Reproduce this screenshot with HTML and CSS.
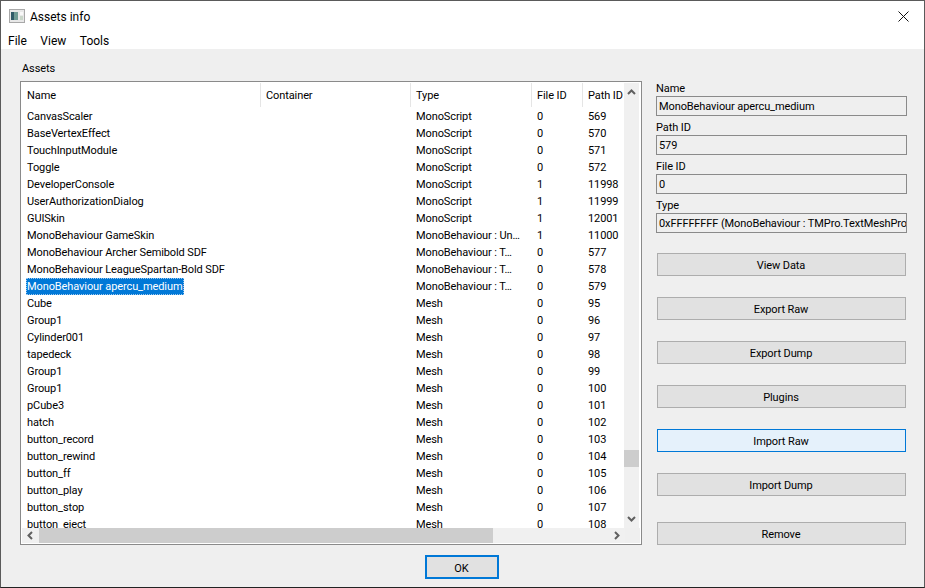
FILE: index.html
```html
<!DOCTYPE html>
<html lang="en">
<head>
<meta charset="utf-8">
<title>Assets info</title>
<link rel="stylesheet" href="styles.css">
</head>
<body>
<div class="window">
  <header class="titlebar">
    <svg class="app-icon" width="16" height="14" viewBox="0 0 16 14"><rect x="0.5" y="0.500" width="15" height="13" fill="#e8e8e8" stroke="#a8a8a8"/><rect x="2" y="3" width="7" height="8" fill="#6f9a94"/><rect x="2" y="3" width="3" height="8" fill="#2f5a68"/><rect x="11" y="3" width="3" height="3" fill="#f8f8f8"/><rect x="11" y="7" width="3" height="4" fill="#c9d6c9"/></svg>
    <span class="title">Assets info</span>
    <svg class="close" width="11" height="11" viewBox="0 0 11 11"><path d="M0.5 0.5L10.5 10.5M10.5 0.5L0.5 10.5" stroke="#111" stroke-width="1" fill="none"/></svg>
  </header>
  <nav class="menubar"><span>File</span><span>View</span><span>Tools</span></nav>
  <main class="content">
    <div class="columns">
      <section class="assets">
        <div class="group-label">Assets</div>
        <div class="table">
          <div class="table-main">
            <div class="viewport">
              <div class="row head"><span>Name</span><span>Container</span><span>Type</span><span>File ID</span><span>Path ID</span></div>
              <div class="rows">
                <div class="row"><span>CanvasScaler</span><span></span><span>MonoScript</span><span>0</span><span>569</span></div>
                <div class="row"><span>BaseVertexEffect</span><span></span><span>MonoScript</span><span>0</span><span>570</span></div>
                <div class="row"><span>TouchInputModule</span><span></span><span>MonoScript</span><span>0</span><span>571</span></div>
                <div class="row"><span>Toggle</span><span></span><span>MonoScript</span><span>0</span><span>572</span></div>
                <div class="row"><span>DeveloperConsole</span><span></span><span>MonoScript</span><span>1</span><span>11998</span></div>
                <div class="row"><span>UserAuthorizationDialog</span><span></span><span>MonoScript</span><span>1</span><span>11999</span></div>
                <div class="row"><span>GUISkin</span><span></span><span>MonoScript</span><span>1</span><span>12001</span></div>
                <div class="row"><span>MonoBehaviour GameSkin</span><span></span><span>MonoBehaviour : Un…</span><span>1</span><span>11000</span></div>
                <div class="row"><span>MonoBehaviour Archer Semibold SDF</span><span></span><span>MonoBehaviour : T…</span><span>0</span><span>577</span></div>
                <div class="row"><span>MonoBehaviour LeagueSpartan-Bold SDF</span><span></span><span>MonoBehaviour : T…</span><span>0</span><span>578</span></div>
                <div class="row"><span><b class="selected">MonoBehaviour apercu_medium</b></span><span></span><span>MonoBehaviour : T…</span><span>0</span><span>579</span></div>
                <div class="row"><span>Cube</span><span></span><span>Mesh</span><span>0</span><span>95</span></div>
                <div class="row"><span>Group1</span><span></span><span>Mesh</span><span>0</span><span>96</span></div>
                <div class="row"><span>Cylinder001</span><span></span><span>Mesh</span><span>0</span><span>97</span></div>
                <div class="row"><span>tapedeck</span><span></span><span>Mesh</span><span>0</span><span>98</span></div>
                <div class="row"><span>Group1</span><span></span><span>Mesh</span><span>0</span><span>99</span></div>
                <div class="row"><span>Group1</span><span></span><span>Mesh</span><span>0</span><span>100</span></div>
                <div class="row"><span>pCube3</span><span></span><span>Mesh</span><span>0</span><span>101</span></div>
                <div class="row"><span>hatch</span><span></span><span>Mesh</span><span>0</span><span>102</span></div>
                <div class="row"><span>button_record</span><span></span><span>Mesh</span><span>0</span><span>103</span></div>
                <div class="row"><span>button_rewind</span><span></span><span>Mesh</span><span>0</span><span>104</span></div>
                <div class="row"><span>button_ff</span><span></span><span>Mesh</span><span>0</span><span>105</span></div>
                <div class="row"><span>button_play</span><span></span><span>Mesh</span><span>0</span><span>106</span></div>
                <div class="row"><span>button_stop</span><span></span><span>Mesh</span><span>0</span><span>107</span></div>
                <div class="row"><span>button_eject</span><span></span><span>Mesh</span><span>0</span><span>108</span></div>
              </div>
            </div>
            <div class="vscroll">
              <svg width="15" height="17" viewBox="0 0 15 17"><path d="M4 11L7.5 7.5L11 11" stroke="#606060" stroke-width="2" fill="none"/></svg>
              <div class="vtrack"><div class="vthumb"></div></div>
              <svg width="15" height="17" viewBox="0 0 15 17"><path d="M4 6L7.5 9.500L11 6" stroke="#606060" stroke-width="2" fill="none"/></svg>
            </div>
          </div>
          <div class="hscroll">
            <svg width="17" height="15" viewBox="0 0 17 15"><path d="M10 4L6.500 7.500L10 11" stroke="#606060" stroke-width="2" fill="none"/></svg>
            <div class="htrack"><div class="hthumb"></div></div>
            <svg width="17" height="15" viewBox="0 0 17 15"><path d="M7 4L10.500 7.500L7 11" stroke="#606060" stroke-width="2" fill="none"/></svg>
            <div class="corner"></div>
          </div>
        </div>
      </section>
      <aside class="side">
        <label class="field-label">Name</label>
        <div class="field">MonoBehaviour apercu_medium</div>
        <label class="field-label">Path ID</label>
        <div class="field">579</div>
        <label class="field-label">File ID</label>
        <div class="field">0</div>
        <label class="field-label">Type</label>
        <div class="field">0xFFFFFFFF (MonoBehaviour : TMPro.TextMeshProUGUI)</div>
        <div class="buttons">
          <button class="btn">View Data</button>
          <button class="btn">Export Raw</button>
          <button class="btn">Export Dump</button>
          <button class="btn">Plugins</button>
          <button class="btn hover">Import Raw</button>
          <button class="btn">Import Dump</button>
          <button class="btn remove">Remove</button>
        </div>
      </aside>
    </div>
    <footer class="footer"><button class="btn ok">OK</button></footer>
  </main>
</div>
</body>
</html>
```
FILE: styles.css
```css
* { box-sizing: border-box; }
html, body { margin: 0; padding: 0; }
body {
  width: 925px;
  height: 588px;
  overflow: hidden;
  font-family: Roboto, sans-serif;
  font-size: 11px;
  letter-spacing: -0.1px;
  color: #000;
  background: #f0f0f0;
}
.window {
  width: 925px;
  height: 588px;
  display: flex;
  flex-direction: column;
  border: 1px solid #5a5a5a;
  border-bottom-color: #222;
}
.titlebar {
  height: 30px;
  flex: none;
  display: flex;
  align-items: center;
  padding: 0 15px 0 8px;
  background: #fff;
}
.app-icon { flex: none; }
.title { margin-left: 5px; padding-top: 2px; font-size: 12px; letter-spacing: 0; flex: 1; }
.close { flex: none; }
.menubar {
  height: 18px;
  flex: none;
  display: flex;
  gap: 13.500px;
  align-items: center;
  padding: 2px 0 0 7px;
  background: #fff;
  font-size: 12px;
  letter-spacing: 0;
}
.content {
  flex: 1;
  display: flex;
  flex-direction: column;
  background: #efefef;
  padding: 11px 17px 0 19px;
}
.columns { display: flex; gap: 14px; }
.assets { width: 622px; flex: none; }
.group-label { height: 16px; line-height: 18px; padding-left: 2px; margin-bottom: 5px; }
.table {
  height: 464px;
  border: 1px solid #8a8a8a;
  padding: 1px;
  background: #fff;
  display: flex;
  flex-direction: column;
}
.table-main { flex: 1; min-height: 0; display: flex; }
.viewport { width: 602px; flex: none; overflow: hidden; display: flex; flex-direction: column; }
.rows { flex: 1; min-height: 0; overflow: hidden; }
.row {
  display: grid;
  grid-template-columns: 239px 150px 121px 51px 41px;
  height: 17px;
  line-height: 17px;
  white-space: nowrap;
}
.row span { padding-left: 5px; overflow: hidden; }
.row.head { height: 25px; line-height: 26px; }
.row.head span { border-right: 1px solid #e5e5e5; height: 24px; }
.row.head span:last-child { border-right: 0; }
.selected {
  display: inline-block;
  margin-left: -1px;
  padding: 0 2px 0 1px;
  height: 17px;
  font-weight: 400;
  color: #fff;
  background: #0078d7;
  outline: 1px dotted #9ec9ee;
  outline-offset: -1px;
}
.vscroll { width: 15px; flex: none; display: flex; flex-direction: column; background: #f0f0f0; }
.vscroll svg, .hscroll svg { flex: none; display: block; }
.vtrack { flex: 1; position: relative; }
.vthumb { position: absolute; left: 0; right: 0; top: 350px; height: 17px; background: #cdcdcd; }
.hscroll { height: 15px; flex: none; display: flex; background: #f0f0f0; }
.htrack { flex: 1; position: relative; }
.hthumb { position: absolute; left: 0; top: 0; bottom: 0; width: 454px; background: #cdcdcd; }
.corner { width: 15px; flex: none; background: #efefef; }
.side { width: 251px; flex: none; padding-top: 21px; }
.field-label { display: block; height: 15px; line-height: 15px; }
.field {
  height: 20px;
  line-height: 20px;
  margin-bottom: 4px;
  padding: 0 2px;
  border: 1px solid #8a8a8a;
  white-space: nowrap;
  overflow: hidden;
}
.buttons { display: flex; flex-direction: column; gap: 21px; margin: 20px 1px 0; }
.btn {
  height: 23px;
  padding: 2px 1px 0 0;
  font: inherit;
  letter-spacing: inherit;
  color: #000;
  background: #e1e1e1;
  border: 1px solid #adadad;
}
.btn.hover { background: #e5f1fb; border-color: #0078d7; }
.btn.remove { margin-top: 5px; }
.footer { display: flex; justify-content: center; padding: 10px 3px 0 0; }
.btn.ok { width: 74px; height: 24px; border: 2px solid #0078d7; }
```
